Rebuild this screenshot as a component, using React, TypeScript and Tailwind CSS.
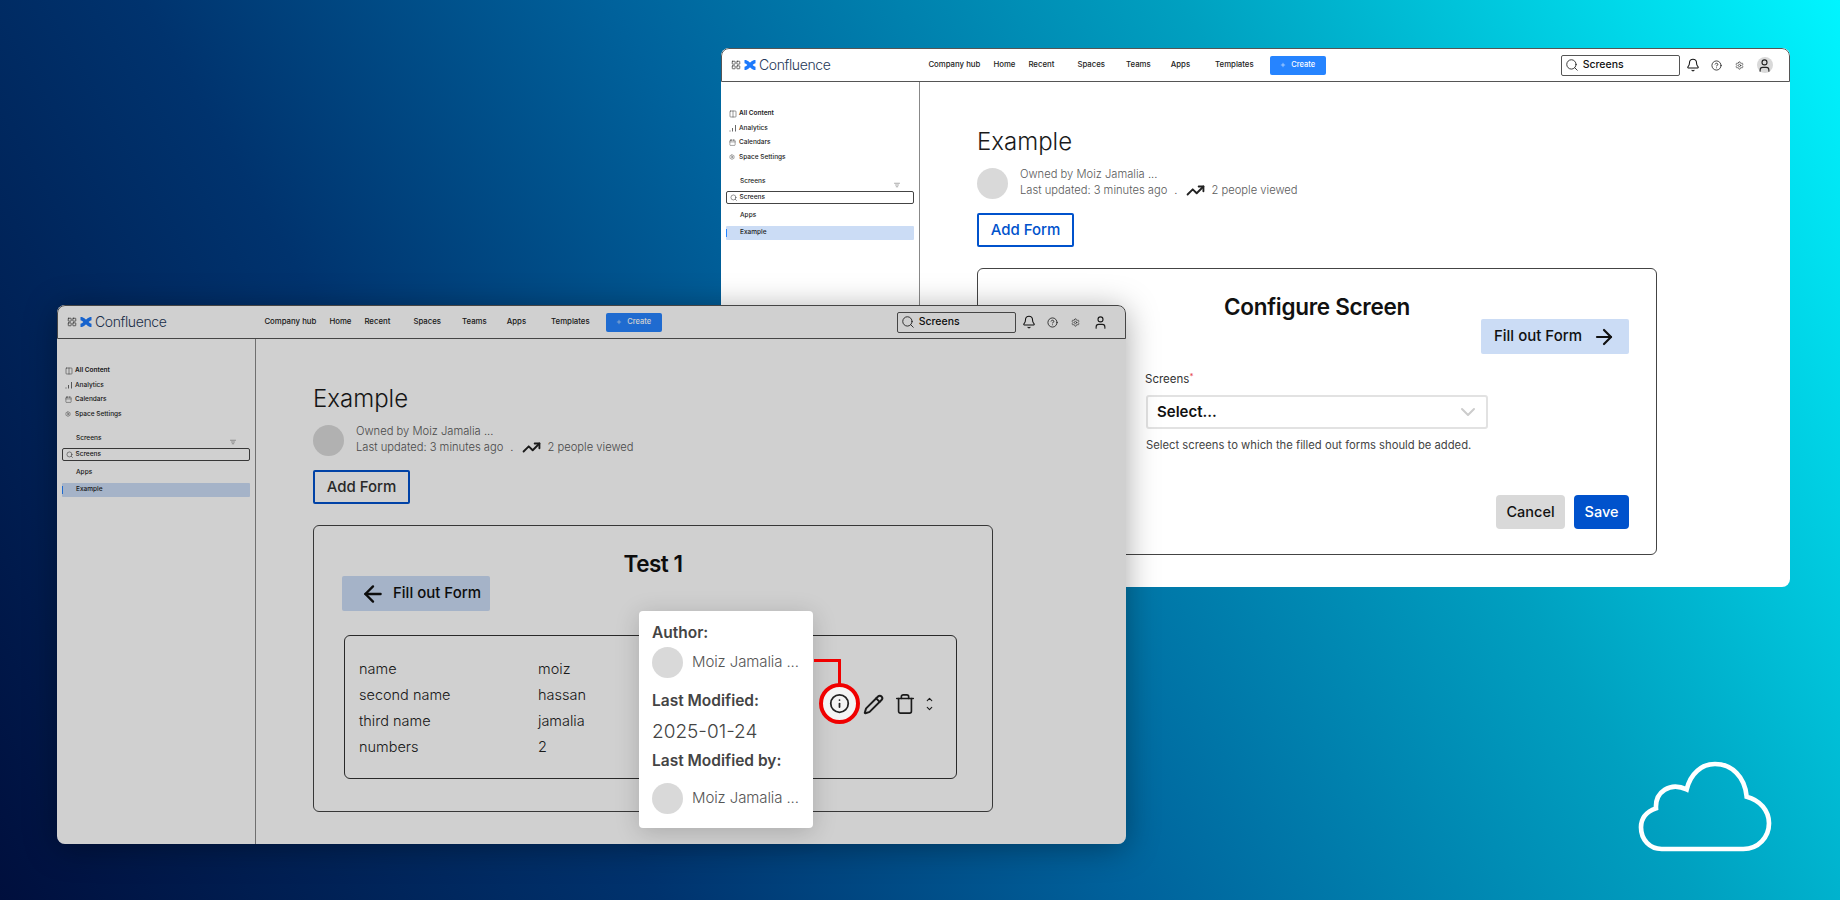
import { ArrowLeft, ArrowRight, Bell, Calendar, ChevronDown, ChevronUp, CircleHelp, Columns2, Info, LayoutGrid, ListFilter, Pencil, Plus, Search, Settings, Trash, TrendingUp, User } from "lucide-react"
import type { ReactNode } from "react"

const navItems = [
  { label: "Company hub", className: "ml-[98px]" },
  { label: "Home", className: "ml-[13px]" },
  { label: "Recent", className: "ml-[13px]" },
  { label: "Spaces", className: "ml-[23px]" },
  { label: "Teams", className: "ml-[21px]" },
  { label: "Apps", className: "ml-[20px]" },
  { label: "Templates", className: "ml-[25px]" },
]

function ConfluenceLogo() {
  return (
    <svg viewBox="0 0 24 20" className="ml-[3px] h-[10px] w-[12px]" fill="none" stroke="#1d7afc" strokeWidth="7">
      <path d="M1 3 C 9 3, 15 17, 23 17" />
      <path d="M1 17 C 9 17, 15 3, 23 3" />
    </svg>
  )
}

function BarsIcon() {
  return (
    <svg viewBox="0 0 8 8" className="h-[8px] w-[8px]" stroke="#444" strokeWidth="0.8">
      <path d="M1 7.5V6.5M3.5 7.5V4M6.5 7.5V1" />
    </svg>
  )
}

function Header({ avatarCircle }: { avatarCircle: boolean }) {
  return (
    <header className="flex h-[34px] shrink-0 items-center rounded-t-[8px] border border-[#555] pl-[9px]">
      <LayoutGrid className="h-[10px] w-[10px] text-[#333]" strokeWidth={1.7} />
      <ConfluenceLogo />
      <span className="-mt-[2px] ml-[3px] text-[14px] font-light tracking-[-0.4px] text-[#253858]">Confluence</span>
      <nav className="flex items-center text-[7.8px] font-medium text-[#222]">
        {navItems.map((item) => (
          <span key={item.label} className={item.className}>
            {item.label}
          </span>
        ))}
      </nav>
      <button className="ml-[16px] flex h-[19px] w-[56px] items-center justify-center gap-[5px] rounded-[2px] bg-[#2684ff] text-[7.5px] font-medium text-white">
        <Plus className="h-[6px] w-[6px]" strokeWidth={2} />
        Create
      </button>
      <div className="ml-[235px] flex h-[21px] w-[119px] items-center gap-[4px] rounded-[2px] border border-[#555] pl-[3px] text-[10.5px] font-medium text-[#111]">
        <Search className="h-[14px] w-[14px] text-[#222]" strokeWidth={1.5} />
        Screens
      </div>
      <Bell className="ml-[6px] h-[14px] w-[14px] text-[#111]" strokeWidth={1.8} />
      <CircleHelp className="ml-[11px] h-[11px] w-[11px] text-[#222]" strokeWidth={1.8} />
      <Settings className="ml-[13px] h-[9px] w-[9px] text-[#333]" strokeWidth={1.8} />
      <div className={`ml-[13px] flex h-[16px] w-[16px] items-center justify-center rounded-full ${avatarCircle ? "bg-[#d9d9d9]" : ""}`}>
        <User className="h-[15px] w-[15px] text-[#222]" strokeWidth={1.8} />
      </div>
    </header>
  )
}

function Sidebar() {
  const links: { label: string; icon: ReactNode; bold?: boolean }[] = [
    { label: "All Content", icon: <Columns2 className="h-[8px] w-[8px]" strokeWidth={1.5} />, bold: true },
    { label: "Analytics", icon: <BarsIcon /> },
    { label: "Calendars", icon: <Calendar className="h-[7px] w-[7px]" strokeWidth={1.5} /> },
    { label: "Space Settings", icon: <Settings className="h-[6px] w-[6px]" strokeWidth={1.5} /> },
  ]
  return (
    <aside className="flex w-[199px] shrink-0 flex-col border-r border-[#888] px-[5px] pt-[25px] text-[6.5px] font-medium text-[#222]">
      {links.map((link) => (
        <div key={link.label} className="flex h-[14.5px] items-center pl-[3px]">
          <span className="-mt-[1px] flex w-[10px] items-center text-[#333]">{link.icon}</span>
          <span className={link.bold ? "font-semibold" : ""}>{link.label}</span>
        </div>
      ))}
      <div className="mt-[10px] flex h-[13px] items-center justify-between pl-[14px] pr-[14px]">
        Screens
        <ListFilter className="mt-[7px] h-[6px] w-[6px] text-[#555]" strokeWidth={2} />
      </div>
      <div className="mt-[3px] flex h-[13px] items-center gap-[2px] rounded-[2px] border border-[#444] pl-[3px]">
        <Search className="h-[7.5px] w-[7.5px]" strokeWidth={1.5} />
        Screens
      </div>
      <div className="mt-[5px] flex h-[14px] items-center pl-[14px]">Apps</div>
      <div className="mt-[3px] flex h-[14px] items-center rounded-[1px] bg-[#cbdcf5]">
        <span className="h-[8px] w-px bg-[#2684ff]" />
        <span className="pl-[13px]">Example</span>
      </div>
    </aside>
  )
}

function PageIntro({ addFormClass }: { addFormClass: string }) {
  return (
    <>
      <h1 className="text-[24px] leading-[30px] font-light text-[#1a1a1a]">Example</h1>
      <div className="mt-[10px] flex h-[32px] items-center">
        <div className="h-[31px] w-[31px] rounded-full bg-[#d9d9d9]" />
        <div className="-mt-[2px] ml-[12px] text-[11.2px] leading-[16px] font-light text-[#5a5a5a]">
          <div>Owned by Moiz Jamalia ...</div>
          <div className="flex h-[16px] items-center">
            Last updated: 3 minutes ago
            <span className="ml-[7px]">.</span>
            <TrendingUp className="ml-[8px] h-[19px] w-[19px] text-[#222]" strokeWidth={2.4} />
            <span className="ml-[7px]">2 people viewed</span>
          </div>
        </div>
      </div>
      <button className={`mt-[14px] flex h-[34px] w-[97px] items-center justify-center rounded-[2px] border-2 border-[#0052cc] text-[15px] font-medium ${addFormClass}`}>
        Add Form
      </button>
    </>
  )
}

function ConfigureCard() {
  return (
    <section className="mt-[21px] flex h-[287px] w-[680px] flex-col rounded-[6px] border border-[#444] pt-[25px]">
      <h2 className="text-center text-[22.5px] leading-[25px] font-semibold tracking-[-0.3px] text-[#111]">Configure Screen</h2>
      <div className="flex justify-end pr-[27px]">
        <button className="flex h-[35px] w-[148px] items-center justify-center gap-[10px] rounded-[2px] bg-[#cbdcf5] text-[15px] font-medium text-[#111]">
          Fill out Form
          <ArrowRight className="h-[24px] w-[24px]" strokeWidth={2.2} />
        </button>
      </div>
      <div className="ml-[167px] mt-[17px] text-[11.5px] leading-[16px] text-[#333]">
        Screens<sup className="text-[8px] leading-none text-[#e5484d]">*</sup>
      </div>
      <div className="ml-[168px] mt-[8px] flex h-[34px] w-[342px] items-center justify-between rounded-[3px] border-2 border-[#e2e2e2] pl-[9px] pr-[6px] text-[15px] font-semibold text-[#111]">
        Select...
        <ChevronDown className="h-[24px] w-[24px] text-[#ccc]" strokeWidth={2} />
      </div>
      <p className="ml-[168px] mt-[9px] text-[11.25px] leading-[14px] text-[#444]">Select screens to which the filled out forms should be added.</p>
      <div className="mb-[25px] mt-auto flex justify-end gap-[9px] pr-[27px]">
        <button className="h-[34px] w-[69px] rounded-[4px] bg-[#d9d9d9] text-[14.5px] font-medium text-[#111]">Cancel</button>
        <button className="h-[34px] w-[55px] rounded-[4px] bg-[#0052cc] text-[14.5px] font-medium text-white">Save</button>
      </div>
    </section>
  )
}

function TestCard() {
  const rows = [
    ["name", "moiz"],
    ["second name", "hassan"],
    ["third name", "jamalia"],
    ["numbers", "2"],
  ]
  return (
    <section className="mt-[21px] flex h-[287px] w-[680px] flex-col rounded-[6px] border border-[#444] pt-[25px]">
      <h2 className="text-center text-[22.5px] leading-[25px] font-semibold tracking-[-0.5px] text-[#111]">Test 1</h2>
      <button className="ml-[28px] flex h-[35px] w-[148px] items-center gap-[7px] rounded-[2px] bg-[#cbdcf5] pl-[18px] text-[15px] font-medium text-[#111]">
        <ArrowLeft className="h-[26px] w-[26px]" strokeWidth={2.2} />
        Fill out Form
      </button>
      <div className="ml-[30px] mt-[24px] flex h-[144px] w-[613px] rounded-[6px] border border-[#333] pl-[14px] pt-[20px]">
        <div className="grid grid-cols-[179px_60px] self-start text-[14.5px] leading-[26px] font-light text-[#222]">
          {rows.map(([name, value]) => (
            <div key={name} className="contents">
              <span>{name}</span>
              <span>{value}</span>
            </div>
          ))}
        </div>
        <div className="ml-[265px] mt-[36px] flex h-[24px] items-center">
          <Pencil className="h-[21px] w-[21px] text-[#222]" strokeWidth={2.2} />
          <Trash className="ml-[10px] h-[22px] w-[22px] text-[#222]" strokeWidth={1.8} />
          <div className="ml-[9px] flex flex-col text-[#222]">
            <ChevronUp className="-mb-[1px] h-[9px] w-[9px]" strokeWidth={3} />
            <ChevronDown className="mt-[1px] h-[9px] w-[9px]" strokeWidth={3} />
          </div>
        </div>
      </div>
    </section>
  )
}

function Person() {
  return (
    <div className="flex items-center">
      <div className="h-[31px] w-[31px] rounded-full bg-[#d9d9d9]" />
      <span className="ml-[9px] text-[15px] font-light tracking-[-0.1px] text-[#555]">Moiz Jamalia ...</span>
    </div>
  )
}

function InfoPopover() {
  return (
    <div className="absolute left-[582px] top-[306px] z-20 h-[217px] w-[174px] rounded-[4px] bg-white px-[13px] pt-[12px] shadow-[0_4px_24px_rgba(0,0,0,0.18)]">
      <div className="text-[15.5px] leading-[20px] font-semibold text-[#444]">Author:</div>
      <div className="mt-[4px]"><Person /></div>
      <div className="mt-[13px] text-[15.5px] leading-[20px] font-semibold text-[#444]">Last Modified:</div>
      <div className="mt-[10px] text-[19px] leading-[22px] font-light text-[#444]">2025-01-24</div>
      <div className="mt-[8px] whitespace-nowrap text-[15.5px] leading-[20px] font-semibold text-[#444]">Last Modified by:</div>
      <div className="mt-[12px]"><Person /></div>
    </div>
  )
}

function InfoCallout() {
  return (
    <>
      <div className="absolute left-[757px] top-[354px] z-20 h-[25px] w-[27px] rounded-tr-[1px] border-r-[3px] border-t-[3px] border-[#f00000]" />
      <div className="absolute left-[762px] top-[378px] z-20 flex h-[41px] w-[41px] items-center justify-center rounded-full border-[4px] border-[#f00000] bg-[#f4f4f4]">
        <Info className="h-[21px] w-[21px] text-[#222]" strokeWidth={2} />
      </div>
    </>
  )
}

function BackWindow() {
  return (
    <div className="absolute left-[721px] top-[48px] flex h-[539px] w-[1069px] flex-col overflow-hidden rounded-[8px] bg-white">
      <Header avatarCircle />
      <div className="flex flex-1">
        <Sidebar />
        <main className="flex-1 pl-[57px] pt-[45px]">
          <PageIntro addFormClass="text-[#0052cc]" />
          <ConfigureCard />
        </main>
      </div>
    </div>
  )
}

function FrontWindow() {
  return (
    <div className="absolute left-[57px] top-[305px] h-[539px] w-[1069px] rounded-[8px] shadow-[0_4px_32px_rgba(0,0,0,0.35)]">
      <div className="flex h-full flex-col overflow-hidden rounded-[8px] bg-white">
        <Header avatarCircle={false} />
        <div className="flex flex-1">
          <Sidebar />
          <main className="flex-1 pl-[57px] pt-[45px]">
            <PageIntro addFormClass="text-[#333]" />
            <TestCard />
          </main>
        </div>
      </div>
      <div className="absolute inset-0 z-10 rounded-[8px] bg-black/[0.184]" />
      <InfoPopover />
      <InfoCallout />
    </div>
  )
}

function Cloud() {
  return (
    <svg viewBox="0 0 600 390" className="absolute left-[1600px] top-[740px] h-[130px] w-[200px]" fill="none" stroke="white" strokeWidth="14">
      <path d="M185 327 H430 C475 327 507 292 507 250 C507 212 480 180 440 170 C435 110 395 72 345 72 C305 72 272 100 260 148 C210 125 165 155 168 205 C140 215 123 235 123 262 C123 300 150 327 185 327 Z" />
    </svg>
  )
}

export default function App() {
  return (
    <div className="relative h-[900px] w-[1840px] overflow-hidden bg-[linear-gradient(60deg,#000f3d_0%,#00336e_28%,#00629c_48%,#00a0c0_72%,#00f5ff_100%)] font-['Inter',sans-serif]">
      <BackWindow />
      <FrontWindow />
      <Cloud />
    </div>
  )
}
